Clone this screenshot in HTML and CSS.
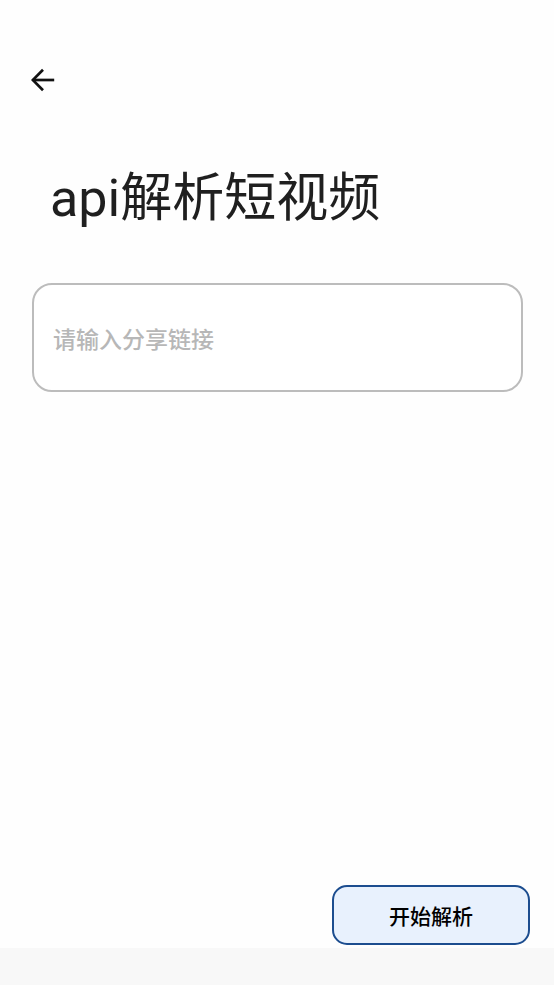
FILE: index.html
```html
<!DOCTYPE html>
<html lang="zh-CN">
<head>
<meta charset="utf-8">
<title>api解析短视频</title>
<link rel="stylesheet" href="styles.css">
</head>
<body>
<div class="screen">
  <main class="content">
    <div class="topbar">
      <svg class="back" width="24" height="24" viewBox="0 0 24 24" aria-label="返回">
        <path d="M1.8 12H23.2" fill="none" stroke="#111" stroke-width="2.7"/>
        <path d="M12 1.8L1.8 12L12 22.2" fill="none" stroke="#111" stroke-width="2.7" stroke-linejoin="miter"/>
      </svg>
    </div>
    <h1 class="title">api解析短视频</h1>
    <input class="link-input" type="text" placeholder="请输入分享链接">
  </main>
  <div class="actions">
    <button class="start-btn" type="button">开始解析</button>
  </div>
  <div class="navbar"></div>
</div>
</body>
</html>
```

FILE: styles.css
```css
html, body {
  margin: 0;
  padding: 0;
  background: #ffffff;
}

.screen {
  width: 554px;
  height: 985px;
  display: flex;
  flex-direction: column;
  font-family: "Roboto", "Noto Sans CJK SC", sans-serif;
  background: #fefefe;
}

.content {
  flex: 1;
  display: flex;
  flex-direction: column;
}

.topbar {
  padding: 68px 0 0 31px;
  height: 24px;
}

.back {
  display: block;
}

.title {
  margin: 77px 0 0 0;
  padding-left: 50px;
  font-size: 52px;
  line-height: 60px;
  font-weight: 400;
  color: #1f1f1f;
}

.link-input {
  margin: 54px 0 0 32px;
  width: 491px;
  height: 109px;
  box-sizing: border-box;
  border: 2px solid #bcbcbc;
  border-radius: 20px;
  padding: 0 19px;
  font-family: "Noto Sans CJK SC", sans-serif;
  font-size: 23px;
  font-weight: 500;
  color: #222;
  background: #ffffff;
  outline: none;
}

.link-input::placeholder {
  color: #b7b7b7;
}

.actions {
  display: flex;
  justify-content: flex-end;
  padding: 0 24px 3px 0;
}

.start-btn {
  width: 198px;
  height: 60px;
  box-sizing: border-box;
  border: 2px solid #1c4d8f;
  border-radius: 15px;
  background: #e8f1fd;
  color: #000;
  font-family: "Noto Sans CJK SC", sans-serif;
  font-size: 21px;
  font-weight: 500;
  padding: 0;
}

.navbar {
  height: 37px;
  background: #f8f8f8;
}
```
